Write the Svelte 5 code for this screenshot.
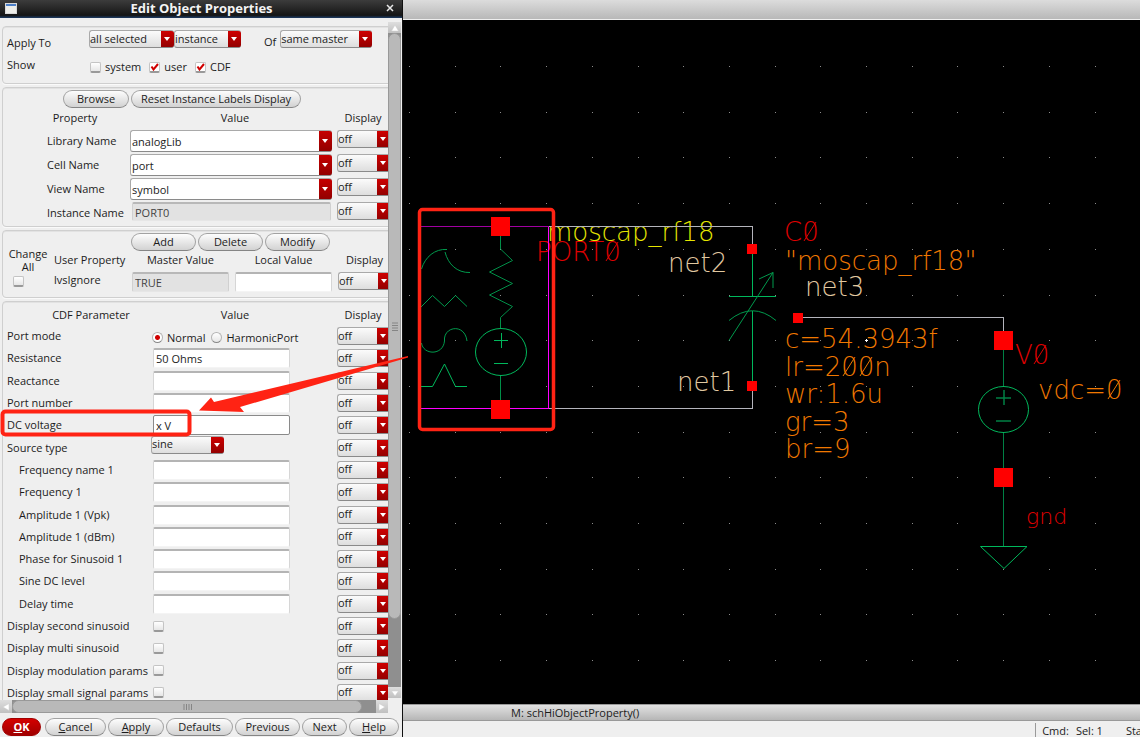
<script>
  const cols = Array.from({ length: 16 }, (_, i) => 409.5 + i * 45.7);
  const rows = Array.from({ length: 14 }, (_, i) => 66.5 + i * 45.7);

  const names = [
    { label: 'Library Name', value: 'analogLib', kind: 'combo' },
    { label: 'Cell Name', value: 'port', kind: 'combo' },
    { label: 'View Name', value: 'symbol', kind: 'combo' },
    { label: 'Instance Name', value: 'PORT0', kind: 'locked' }
  ];

  const params = [
    { label: 'Port mode', kind: 'radio' },
    { label: 'Resistance', kind: 'text', value: '50 Ohms' },
    { label: 'Reactance', kind: 'text', value: '' },
    { label: 'Port number', kind: 'text', value: '' },
    { label: 'DC voltage', kind: 'text', value: 'x V', focus: true },
    { label: 'Source type', kind: 'select', value: 'sine' },
    { label: 'Frequency name 1', kind: 'text', value: '', sub: true },
    { label: 'Frequency 1', kind: 'text', value: '', sub: true },
    { label: 'Amplitude 1 (Vpk)', kind: 'text', value: '', sub: true },
    { label: 'Amplitude 1 (dBm)', kind: 'text', value: '', sub: true },
    { label: 'Phase for Sinusoid 1', kind: 'text', value: '', sub: true },
    { label: 'Sine DC level', kind: 'text', value: '', sub: true },
    { label: 'Delay time', kind: 'text', value: '', sub: true },
    { label: 'Display second sinusoid', kind: 'check' },
    { label: 'Display multi sinusoid', kind: 'check' },
    { label: 'Display modulation params', kind: 'check' },
    { label: 'Display small signal params', kind: 'check' }
  ];

  const labels = [
    { x: 547, y: 241, c: 'yellow', t: 'moscap_rf18' },
    { x: 536, y: 261, c: 'red', t: 'PORT0' },
    { x: 668, y: 272, c: 'tan', t: 'net2' },
    { x: 677, y: 391, c: 'tan', t: 'net1' },
    { x: 784, y: 241, c: 'red', t: 'C0' },
    { x: 785, y: 270, c: 'orange', t: '"moscap_rf18"' },
    { x: 805, y: 296, c: 'tan', t: 'net3' },
    { x: 785, y: 348, c: 'orange', t: 'c=54.3943f' },
    { x: 785, y: 376, c: 'orange', t: 'lr=200n' },
    { x: 785, y: 403, c: 'orange', t: 'wr:1.6u' },
    { x: 785, y: 431, c: 'orange', t: 'gr=3' },
    { x: 785, y: 458, c: 'orange', t: 'br=9' },
    { x: 1015, y: 364, c: 'red', t: 'V0' },
    { x: 1038, y: 399, c: 'orange', t: 'vdc=0' },
    { x: 1026, y: 524, c: 'red small', t: 'gnd' }
  ];

  // Strokes through the zeros: centre x, baseline y, colour
  const slashes = [
    [612, 261, '#e00000'], [810, 241, '#e00000'], [1040, 364, '#e00000'],
    [849, 376, '#f07800'], [866, 376, '#f07800'], [1114, 399, '#f07800']
  ];

  const pins = [
    [491, 217, 19], [491, 400, 19], [747, 244, 10], [747, 381, 10],
    [793, 313, 10], [994, 331, 19], [994, 468, 19]
  ];
</script>

{#snippet off(name)}
  <select class="dd off" aria-label={name + ' display'}><option>off</option></select>
{/snippet}

<div class="screen">
  <section class="dialog" aria-label="Edit Object Properties">
    <header class="titlebar">
      <svg class="winicon" width="12" height="11" viewBox="0 0 12 11">
        <rect x="0.5" y="0.5" width="11" height="10" fill="#eeeeea" stroke="#d8d8d8" />
        <rect x="1" y="1" width="10" height="2" fill="#4c7fc8" />
      </svg>
      <h1>Edit Object Properties</h1>
      <button class="close" aria-label="Close">
        <svg width="8" height="8" viewBox="0 0 8 8"><path d="M1 1 7 7M7 1 1 7" stroke="#e8e8e8" stroke-width="1.5" /></svg>
      </button>
    </header>

    <div class="body">
      <div class="pane">
        <div class="content">
          <div class="group apply">
            <span class="cap">Apply To</span>
            <div class="line">
              <select class="dd w-all" aria-label="Apply to"><option>all selected</option></select>
              <select class="dd w-inst" aria-label="Object type"><option>instance</option></select>
              <label class="of" for="of">Of</label>
              <select class="dd w-same" id="of"><option>same master</option></select>
            </div>
            <span class="cap">Show</span>
            <div class="line checks">
              <label><input type="checkbox" />system</label>
              <label><input type="checkbox" checked />user</label>
              <label><input type="checkbox" checked />CDF</label>
            </div>
          </div>

          <div class="group props">
            <div class="buttons browse">
              <button class="pill b-browse">Browse</button>
              <button class="pill b-reset">Reset Instance Labels Display</button>
            </div>
            <div class="head"><span>Property</span><span>Value</span><span>Display</span></div>
            {#each names as n, i}
              <div class="prow">
                <label for={'n' + i}>{n.label}</label>
                {#if n.kind === 'combo'}
                  <select class="dd combo" id={'n' + i}><option>{n.value}</option></select>
                {:else}
                  <input class="field locked" id={'n' + i} value={n.value} readonly />
                {/if}
                {@render off(n.label)}
              </div>
            {/each}
          </div>

          <div class="group user">
            <div class="buttons">
              <button class="pill">Add</button>
              <button class="pill">Delete</button>
              <button class="pill">Modify</button>
            </div>
            <div class="ugrid">
              <label class="change" for="all">Change All</label>
              <span>User Property</span>
              <span class="mid">Master Value</span>
              <span class="mid">Local Value</span>
              <span class="mid">Display</span>
              <div class="allbox"><input type="checkbox" id="all" /></div>
              <label class="name" for="local">lvsIgnore</label>
              <input class="field locked" value="TRUE" readonly aria-label="Master value" />
              <input class="field" id="local" />
              {@render off('lvsIgnore')}
            </div>
          </div>

          <div class="group cdf">
            <div class="head"><span>CDF Parameter</span><span>Value</span><span>Display</span></div>
            {#each params as p, i}
              <div class="crow">
                {#if p.kind === 'radio'}
                  <span>{p.label}</span>
                  <div class="radios">
                    <label><input type="radio" name="mode" checked />Normal</label>
                    <label><input type="radio" name="mode" />HarmonicPort</label>
                  </div>
                {:else}
                  <label class:sub={p.sub} for={'p' + i}>{p.label}</label>
                  {#if p.kind === 'text'}
                    <input class="field" class:focus={p.focus} id={'p' + i} value={p.value} />
                  {:else if p.kind === 'select'}
                    <select class="dd source" id={'p' + i}><option>{p.value}</option></select>
                  {:else}
                    <input type="checkbox" id={'p' + i} />
                  {/if}
                {/if}
                {@render off(p.label)}
              </div>
            {/each}
          </div>
        </div>
        <div class="hbar">
          <span class="arrow"><svg width="8" height="8" viewBox="0 0 8 8"><path d="M7 .5 1 4 7 7.500z" fill="#fff" stroke="#ccc" stroke-width=".5" /></svg></span>
          <span class="thumb"><svg width="9" height="6" viewBox="0 0 9 6"><path d="M1 0V6M3.500 0V6M6 0V6M8.500 0V6" stroke="#858585" /></svg></span>
          <span class="arrow"><svg width="8" height="8" viewBox="0 0 8 8"><path d="M1 .5 7 4 1 7.500z" fill="#fff" stroke="#ccc" stroke-width=".5" /></svg></span>
        </div>
      </div>
      <div class="vbar">
        <span class="arrow"><svg width="8" height="8" viewBox="0 0 8 8"><path d="M4 1 7.500 7H.5z" fill="#fff" stroke="#ccc" stroke-width=".5" /></svg></span>
        <span class="thumb"><svg width="6" height="9" viewBox="0 0 6 9"><path d="M0 1H6M0 3.500H6M0 6H6M0 8.500H6" stroke="#858585" /></svg></span>
        <span class="arrow"><svg width="8" height="8" viewBox="0 0 8 8"><path d="M.5 2H7.500L4 7z" fill="#fff" stroke="#ccc" stroke-width=".5" /></svg></span>
      </div>
    </div>

    <footer class="actions">
      <button class="pill ok"><u>O</u>K</button>
      <button class="pill a-cancel"><span><u>C</u>ancel</span></button>
      <button class="pill a-apply"><span><u>A</u>pply</span></button>
      <button class="pill a-def">Defaults</button>
      <button class="pill a-prev">Previous</button>
      <button class="pill a-next">Next</button>
      <button class="pill a-help"><span><u>H</u>elp</span></button>
    </footer>
  </section>

  <main class="editor">
    <div class="topbar"></div>
    <div class="canvas">
      <svg class="schematic" viewBox="403 20 737 684" preserveAspectRatio="xMinYMin meet">
        {#each cols as x}
          {#each rows as y}
            <rect x={Math.floor(x)} y={Math.floor(y)} width="1" height="1" fill="#8c8c8c" />
          {/each}
        {/each}

        {#each labels as l}
          <text class={l.c} x={l.x} y={l.y}>{l.t}</text>
        {/each}
        {#each slashes as [x, y, c]}
          <path d="M{x - 6} {y}L{x + 6} {y - 19}" stroke={c} />
        {/each}

        <g fill="none" stroke="#b4b4bc" shape-rendering="crispEdges">
          <path d="M549 226.500H752.500V246M549 408.500H752.500V390M802 317.500H1003.500V333" />
        </g>
        <g fill="none" stroke="#00b85c">
          <path d="M500.500 235V249L512.500 260.500 489.500 272 512.500 283.500 489.500 295 512.500 306.500 500.500 317.500V328.500M500.500 375V401" stroke="#008f48" />
          <ellipse cx="501" cy="352" rx="25.500" ry="23.500" />
          <path d="M494 340.500H508M501.500 333V348M494 363.500H508" />
          <path d="M421.500 269C425 257 435 248.500 447 249.500M445 252C448 264 457 273 470 272.500" stroke="#009a4d" />
          <path d="M421 307 432.500 295.500 444.500 306.500 455.500 295.500 467 306.500" stroke="#009a4d" />
          <path d="M421.500 343C423 355 443 356 444.500 341V338C446 326 465 324 467 341" stroke="#009a4d" />
          <path d="M421 386.500H432.500L444.500 364 455.500 386.500H467" />
          <path d="M752.500 254V296.500M729 296.500H776M752.500 311V382" />
          <path d="M729 320.500Q752.500 301 776 320.500M729 340.500 773 272.500M759 279 773 272.500V288" stroke="#009a4d" />
          <path d="M1003.500 350V386.500M1003.500 432.500V469M1003.500 487V546.500" stroke="#008044" />
          <ellipse cx="1003.500" cy="409.500" rx="25" ry="23" />
          <path d="M996 398H1011M1004 390V405M996 421H1011" stroke="#008044" stroke-width="1.500" />
          <path d="M980.500 546.500H1027L1004 568.500Z" />
        </g>
        <path d="M421 226.500H549" stroke="#a000a0" shape-rendering="crispEdges" />
        <path d="M421 408.500H548.500V227" fill="none" stroke="#f0f" shape-rendering="crispEdges" />
        {#each pins as [x, y, s]}
          <rect {x} {y} width={s} height={s} fill="#f00" />
        {/each}
        <path d="M865 340.500H868M866.500 339V342" stroke="#fff" />
        <rect x="419.500" y="209.500" width="134" height="220" rx="3" fill="none" stroke="#ff2314" stroke-width="3.500" />
      </svg>
    </div>
    <div class="prompt">M: schHiObjectProperty()</div>
    <div class="status"><div class="cmd"><span>Cmd:</span><span>Sel: 1</span><span class="sta">Sta</span></div></div>
  </main>

  <svg class="notes" width="412" height="450" viewBox="0 0 412 450" aria-hidden="true">
    <rect x="2.500" y="411.500" width="187" height="23" rx="3" fill="none" stroke="#ff2314" stroke-width="4" />
    <path d="M199 410.500 211 397.500 214 402 408 356V357.500L240 407 244 412z" fill="#ff2314" />
  </svg>
</div>

<style>
  :global(body) { margin: 0; background: #000; }
  * { box-sizing: border-box; }
  .screen {
    position: relative;
    display: grid;
    grid-template-columns: minmax(403px, 35%) minmax(0, 1fr);
    height: 100vh;
    overflow: hidden;
    font: 11px/14px "Open Sans", "Noto Sans", sans-serif;
    color: #1c1c1c;
  }
  button, select, input { font: inherit; color: inherit; margin: 0; }
  .dialog {
    display: flex;
    flex-direction: column;
    min-height: 0;
    background: #efefef;
    border-right: 1px solid #111;
  }
  .titlebar {
    flex: none;
    display: flex;
    align-items: center;
    height: 18px;
    padding: 0 8px 2px 5px;
    background: linear-gradient(#3c3c3c, #151515 85%, #1d3c66);
    color: #f4f4f4;
  }
  .winicon { display: block; }
  h1 { flex: 1; margin: 0; font-size: 13px; line-height: 16px; font-weight: 700; text-align: center; }
  .close { display: flex; padding: 0; border: 0; background: none; }
  .body { flex: 1; min-height: 0; display: flex; padding: 4px 1px 0 0; }
  .pane { flex: 1; min-width: 0; display: flex; flex-direction: column; }
  .content {
    flex: 1;
    min-height: 0;
    overflow: hidden;
    display: flex;
    flex-direction: column;
    gap: 3px;
    padding: 4px 0 0 2px;
  }
  .group {
    flex: none;
    margin-right: -8px;
    border: 1px solid #cfcfcf;
    border-radius: 4px;
    box-shadow: inset 0 1px 0 #e2e2e2, 0 1px 0 #fafafa;
  }
  .apply {
    display: grid;
    grid-template-columns: 82px 1fr;
    grid-template-rows: 20px 24px;
    row-gap: 6px;
    height: 58px;
    padding: 3px 0 0 4px;
  }
  .cap { padding-top: 6px; }
  .apply .cap:nth-of-type(2) { padding-top: 2px; }
  .line { display: flex; align-items: flex-start; }
  .of { padding: 5px 4px 0 23px; }
  .w-all { width: 85px; }
  .w-inst { width: 67px; }
  .w-same { width: 92px; }
  .checks { gap: 8px; padding: 4px 0 0 1px; }
  .checks label, .radios label { display: flex; align-items: center; gap: 4px; }

  .dd {
    appearance: none;
    height: 18px;
    padding: 0 13px 1px 0;
    border: 1px solid #a9a9a9;
    border-bottom-color: #8a8a8a;
    border-right: 0;
    border-radius: 3px;
    line-height: 14px;
    background:
      url('data:image/svg+xml,<svg xmlns="http://www.w3.org/2000/svg" width="13" height="6"><path d="M3 1h6L6 5z" fill="white"/></svg>') right center / 13px 6px no-repeat,
      linear-gradient(#d20000, #900000) right / 13px 100% no-repeat,
      linear-gradient(#fdfdfd, #dcdcdc);
    background-origin: border-box;
  }
  .off { width: 53px; }
  .combo {
    height: 22px;
    padding: 2px 13px 0 1px;
    background:
      url('data:image/svg+xml,<svg xmlns="http://www.w3.org/2000/svg" width="13" height="6"><path d="M3 1h6L6 5z" fill="white"/></svg>') right center / 13px 6px no-repeat,
      linear-gradient(#c80000, #900000) right / 13px 100% no-repeat,
      #fff;
    background-origin: border-box;
  }
  .pill {
    height: 18px;
    padding: 0 0 1px;
    border: 1px solid #a2a2a2;
    border-bottom-color: #858585;
    border-radius: 9px;
    background: linear-gradient(#fdfdfd, #d2d2d2);
    line-height: 14px;
    white-space: nowrap;
  }
  .field {
    width: 100%;
    min-width: 0;
    height: 20px;
    padding: 0 2px;
    border: 1px solid #d6d6d6;
    border-top: 2px solid #b4b4b4;
    border-bottom-color: #f4f4f4;
    border-radius: 2px;
    background: #fff;
  }
  .field.focus { border-color: #8a8a8a; border-width: 1px; }
  .field.locked { background: #e2e2e2; border-color: #b8b8b8 #d0d0d0 #e6e6e6; color: #444; }

  input[type='checkbox'], input[type='radio'] {
    appearance: none;
    flex: none;
    width: 11px;
    height: 11px;
    border: 1px solid #c4c4c4;
    border-bottom: 2px solid #999;
    border-radius: 2px;
    background: linear-gradient(#fff, #e6e6e6);
  }
  input[type='checkbox']:checked {
    background: url('data:image/svg+xml,<svg xmlns="http://www.w3.org/2000/svg" width="9" height="8"><path d="M1.500 3.500L3.500 6.500L8 1" fill="none" stroke="%23d00000" stroke-width="2"/></svg>') center / 9px 8px no-repeat, #fff;
  }
  input[type='radio'] { border-radius: 50%; border-bottom-width: 1px; border-color: #b4b4b4 #b4b4b4 #888; }
  input[type='radio']:checked { background: radial-gradient(circle, #d00000 0 2px, #fff 3px); }

  .props { height: 140px; padding-top: 2px; }
  .buttons { display: flex; gap: 2px; padding-left: 128px; }
  .browse { padding-left: 60px; }
  .b-browse { width: 66px; }
  .b-reset { width: 170px; }
  .head {
    display: grid;
    grid-template-columns: 150px 170px 1fr;
    height: 22px;
    align-items: center;
  }
  .head span { text-align: center; }
  .props .head { grid-template-columns: 144px 176px 80px; padding-bottom: 2px; }
  .prow {
    display: grid;
    grid-template-columns: 82px 202px 53px;
    column-gap: 1px;
    height: 24px;
    padding-left: 44px;
    align-items: start;
  }
  .prow label { padding-top: 4px; }
  .prow .off { margin-left: 4px; }
  .prow .locked { margin-left: 2px; width: 199px; height: 19px; }

  .user { height: 68px; padding-top: 2px; }
  .user .pill { width: 65px; }
  .ugrid {
    display: grid;
    grid-template-columns: 45px 72px 97px 97px 53px;
    grid-template-rows: 21px 22px;
    column-gap: 6px;
    align-items: start;
  }
  .ugrid > span { padding-top: 2px; white-space: nowrap; }
  .ugrid .mid { text-align: center; }
  .ugrid .name { padding-top: 1px; }
  .change { margin-top: -4px; padding-left: 5px; line-height: 13px; text-align: center; }
  .allbox { padding: 4px 0 0 10px; }

  .cdf {
    flex: 1 0 0;
    min-height: 0;
    display: flex;
    flex-direction: column;
    margin-bottom: -5px;
  }
  .cdf .head { flex: none; height: 23px; padding-top: 3px; grid-template-columns: 176px 112px 144px; }
  .crow {
    flex: 1;
    min-height: 20px;
    display: grid;
    grid-template-columns: 150px 137px 53px;
    align-items: center;
    padding-left: 4px;
  }
  .crow > label, .crow > span { white-space: nowrap; }
  .crow > .field { margin-left: -4px; }
  .crow > .source { width: 73px; margin: -6px 0 0 -6px; }
  .crow > input[type='checkbox'] { margin-left: -4px; }
  .crow .off { margin-left: 43px; }
  .sub { padding-left: 12px; }
  .radios { display: flex; gap: 6px; white-space: nowrap; padding-top: 3px; margin-left: -5px; }

  .arrow {
    flex: none;
    display: flex;
    align-items: center;
    justify-content: center;
    width: 12px;
    height: 11px;
    background: linear-gradient(#dedede, #c0c0c0);
  }
  .hbar { flex: none; display: flex; height: 13px; background: #8f8f8f; }
  .hbar .arrow { height: 13px; }
  .thumb {
    display: flex;
    align-items: center;
    justify-content: center;
    background: #b9b9b9;
    border: 1px solid #999;
    border-radius: 7px;
  }
  .hbar .thumb { flex: 1; margin-right: 14px; }
  .vbar { flex: none; width: 13px; display: flex; flex-direction: column; background: #8f8f8f; margin-bottom: 15px; }
  .vbar .arrow { width: 13px; }
  .vbar .thumb { flex: 1; margin-bottom: 68px; }

  .actions { flex: none; display: flex; gap: 2px; padding: 5px 2px 1px; }
  .ok { width: 39px; margin-right: 2px; background: linear-gradient(#d40000, #a00000); border-color: #a00000; color: #fff; font-weight: 700; }
  .a-cancel { width: 61px; }
  .a-apply { width: 56px; }
  .a-def { width: 67px; }
  .a-prev { width: 65px; }
  .a-next { width: 45px; }
  .a-help { width: 50px; }

  .editor { display: flex; flex-direction: column; min-width: 0; min-height: 0; }
  .topbar { flex: none; height: 20px; background: linear-gradient(#dcdcdc, #b8b8b8); border-bottom: 1px solid #eee; }
  .canvas { flex: 1; min-height: 0; background: #000; }
  .schematic { display: block; width: 100%; height: 100%; }
  .schematic text { font: 200 26px "DejaVu Sans", sans-serif; }
  .schematic .small { font-size: 22px; }
  .yellow { fill: #e6e600; }
  .red { fill: #e00000; }
  .tan { fill: #e0c8a0; }
  .orange { fill: #f07800; }
  .prompt {
    flex: none;
    height: 17px;
    padding-left: 108px;
    line-height: 16px;
    background: linear-gradient(#e2e2e2, #b6b6b6);
    border-top: 1px solid #999;
    border-bottom: 1px solid #999;
  }
  .status { flex: none; display: flex; justify-content: flex-end; height: 16px; background: #efefef; padding-top: 2px; overflow: hidden; }
  .cmd { display: flex; gap: 7px; height: 18px; padding-left: 6px; border-left: 1px solid #999; line-height: 16px; white-space: nowrap; }
  .sta { padding-left: 16px; margin-right: -2px; }
  .notes { position: absolute; left: 0; top: 0; pointer-events: none; }
</style>
